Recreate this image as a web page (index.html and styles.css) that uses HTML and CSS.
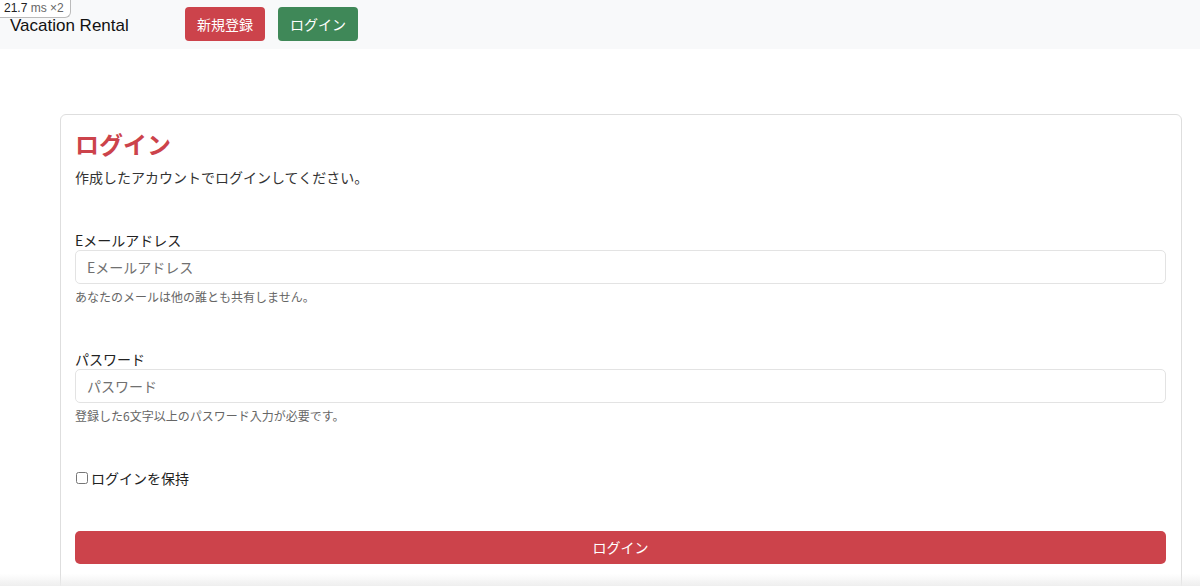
FILE: index.html
```html
<!DOCTYPE html>
<html lang="ja">
<head>
<meta charset="UTF-8" />
<title>Vacation Rental - ログイン</title>
<link rel="stylesheet" href="styles.css">
</head>
<body>
  <div class="perf-badge">21.7 <span class="unit">ms</span> <span class="unit">×2</span></div>

  <nav class="navbar">
    <a class="brand" href="#">Vacation Rental</a>
    <div class="nav-actions">
      <a class="btn btn-danger" href="#">新規登録</a>
      <a class="btn btn-success" href="#">ログイン</a>
    </div>
  </nav>

  <main class="container">
    <div class="card">
      <h1 class="card-title">ログイン</h1>
      <p class="card-lead">作成したアカウントでログインしてください。</p>

      <form class="login-form">
        <div class="form-group">
          <label for="email">Eメールアドレス</label>
          <input type="email" id="email" class="form-control" placeholder="Eメールアドレス">
          <small class="form-text">あなたのメールは他の誰とも共有しません。</small>
        </div>

        <div class="form-group">
          <label for="password">パスワード</label>
          <input type="password" id="password" class="form-control" placeholder="パスワード">
          <small class="form-text">登録した6文字以上のパスワード入力が必要です。</small>
        </div>

        <div class="form-check">
          <input type="checkbox" id="remember">
          <label for="remember">ログインを保持</label>
        </div>

        <button type="submit" class="btn btn-danger btn-block">ログイン</button>
      </form>
    </div>
  </main>

  <div class="bottom-fade"></div>
</body>
</html>
```

FILE: styles.css
```css
* {
  box-sizing: border-box;
}

body {
  margin: 0;
  font-family: "Liberation Sans", "Noto Sans CJK JP", sans-serif;
  font-size: 14px;
  color: #212529;
  background: #fff;
}

/* dev overlay in the corner */
.perf-badge {
  position: absolute;
  top: 0;
  left: 0;
  padding: 1px 6px 2px 4px;
  font-size: 12px;
  line-height: 14px;
  color: #222;
  background: #fff;
  border: 1px solid #bbb;
  border-top: none;
  border-left: none;
  border-radius: 0 0 6px 0;
  z-index: 10;
}

.perf-badge .unit {
  color: #666;
}

.navbar {
  display: flex;
  align-items: center;
  height: 49px;
  padding: 0 10px;
  background: #f8f9fa;
}

.brand {
  font-size: 17px;
  color: #111;
  text-decoration: none;
  width: 175px;
  padding-top: 2px;
}

.nav-actions {
  display: flex;
  gap: 13px;
  margin-top: -1px;
}

.btn {
  display: inline-block;
  height: 34px;
  line-height: 34px;
  padding: 0 12px;
  font-family: "Noto Sans CJK JP", sans-serif;
  font-size: 14px;
  color: #fff;
  text-decoration: none;
  text-align: center;
  border: none;
  border-radius: 4px;
  cursor: pointer;
}

.btn-danger {
  background: #cc434b;
}

.btn-success {
  background: #3f8858;
}

.container {
  padding: 65px 18px 0 60px;
}

.card {
  border: 1px solid #dedede;
  border-radius: 6px;
  padding: 13px 15px 40px 14px;
  font-family: "Noto Sans CJK JP", sans-serif;
}

.card-title {
  margin: 0;
  font-size: 24px;
  line-height: 31px;
  font-weight: 700;
  color: #cc434b;
}

.card-lead {
  margin: 8px 0 0;
  line-height: 20px;
  color: #333;
}

.login-form {
  display: flex;
  flex-direction: column;
  gap: 43px;
  margin-top: 43px;
}

.form-group label {
  display: block;
  line-height: 20px;
  color: #222;
}

.form-control {
  display: block;
  width: 100%;
  height: 34px;
  padding: 0 11px;
  font-family: "Noto Sans CJK JP", sans-serif;
  font-size: 14px;
  color: #333;
  background: #fff;
  border: 1px solid #e3e3e3;
  border-radius: 5px;
}

.form-control::placeholder {
  color: #707070;
}

.form-text {
  display: block;
  margin-top: 4px;
  font-size: 12px;
  line-height: 18px;
  color: #666;
}

.form-check {
  display: flex;
  align-items: center;
  height: 20px;
  gap: 3px;
}

.form-check input {
  width: 12px;
  height: 12px;
  margin: 0 0 0 1px;
}

.form-check label {
  font-size: 14px;
  line-height: 20px;
  color: #222;
}

.btn-block {
  display: block;
  width: 100%;
  height: 33px;
  line-height: 33px;
  border-radius: 5px;
}

.bottom-fade {
  position: fixed;
  left: 0;
  right: 0;
  bottom: 0;
  height: 12px;
  background: linear-gradient(to bottom, rgba(240,240,240,0), rgba(236,236,236,0.9));
  pointer-events: none;
}
```
